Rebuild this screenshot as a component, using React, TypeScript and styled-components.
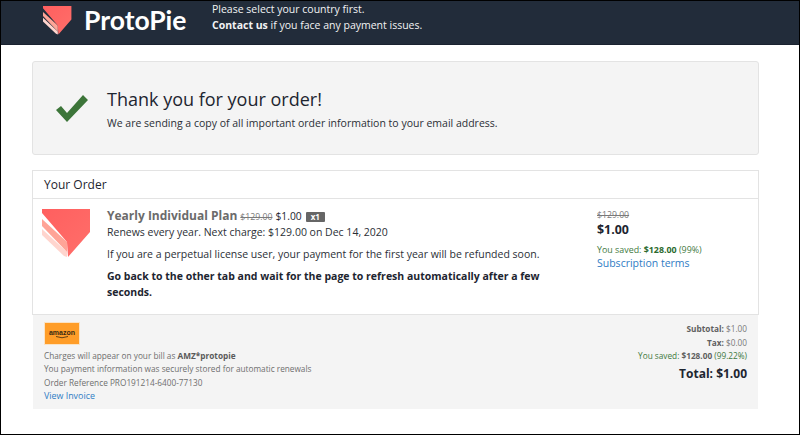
import React from "react";
import styled, { createGlobalStyle } from "styled-components";

const GlobalStyle = createGlobalStyle`
  html, body {
    margin: 0;
    padding: 0;
    background: #fff;
  }
  * {
    box-sizing: border-box;
  }
`;

const Page = styled.div`
  width: 800px;
  height: 435px;
  border: 1px solid #000;
  overflow: hidden;
  background: #fff;
  color: #1d2530;
  font-family: "Open Sans", "Liberation Sans", sans-serif;
`;

const TopBar = styled.header`
  height: 44px;
  background: #222c3a;
  border-bottom: 1px solid #1a2230;
  display: flex;
  align-items: flex-start;
  padding-left: 42px;
`;

const Brand = styled.div`
  display: flex;
  align-items: center;
  gap: 12px;
  width: 169px;
  height: 34px;
  margin-top: 2px;
`;

const BrandName = styled.span`
  color: #fff;
  font-size: 26.5px;
  font-weight: 700;
  line-height: 34px;
  margin-top: -1px;
  font-family: "Lato", "Open Sans", sans-serif;
`;

const TopNote = styled.div`
  color: #f2f3f4;
  font-size: 10.5px;
  line-height: 16px;
  strong {
    font-weight: 700;
  }
`;

const Content = styled.main`
  padding: 16px 40px 0 31px;
  display: flex;
  flex-direction: column;
`;

const ThanksBox = styled.section`
  height: 94px;
  background: #f4f4f4;
  border: 1px solid #e3e3e3;
  border-radius: 3px;
  display: flex;
  align-items: center;
  gap: 18px;
  padding-left: 23px;
`;

const ThanksText = styled.div`
  display: flex;
  flex-direction: column;
  gap: 3px;
`;

const ThanksTitle = styled.h1`
  margin: 0;
  font-size: 18px;
  font-weight: 400;
  line-height: 27px;
  color: #1d2530;
`;

const ThanksBody = styled.p`
  margin: 0;
  font-size: 10.5px;
  line-height: 15px;
  color: #2b2f36;
`;

const OrderCard = styled.section`
  margin-top: 15px;
  height: 145px;
  border: 1px solid #e3e3e3;
  display: flex;
  flex-direction: column;
`;

const OrderHeading = styled.h2`
  margin: 0;
  height: 28px;
  padding-left: 11px;
  border-bottom: 1px solid #e3e3e3;
  font-size: 12px;
  font-weight: 400;
  line-height: 27px;
  color: #1d2530;
`;

const OrderRow = styled.div`
  display: flex;
  padding: 9px 0 0 9px;
`;

const ProductLogo = styled.div`
  width: 65px;
  flex: none;
  padding-top: 1px;
`;

const ProductInfo = styled.div`
  width: 490px;
  flex: none;
  padding-right: 48px;
  font-size: 10.5px;
  line-height: 15px;
  color: #2b2f36;
`;

const TitleLine = styled.div`
  display: flex;
  align-items: baseline;
  gap: 3px;
  height: 15px;
`;

const PlanName = styled.span`
  font-size: 12px;
  font-weight: 700;
  color: #6b6b6b;
`;

const OldPrice = styled.s`
  font-size: 8.7px;
  color: #7a7a7a;
`;

const NewPrice = styled.span`
  font-size: 10.3px;
  color: #1d2530;
`;

const Qty = styled.span`
  background: #666;
  color: #fff;
  font-size: 8px;
  font-weight: 700;
  line-height: 10px;
  padding: 0 5px;
  border-radius: 1px;
  margin-left: 1px;
`;

const InfoLine = styled.p<{ $gap?: number; $bold?: boolean }>`
  margin: ${(p) => p.$gap ?? 0}px 0 0;
  font-weight: ${(p) => (p.$bold ? 700 : 400)};
  line-height: ${(p) => (p.$bold ? 16 : 15)}px;
  color: ${(p) => (p.$bold ? "#1d2530" : "#2b2f36")};
`;

const PriceColumn = styled.div`
  padding-top: 1px;
  display: flex;
  flex-direction: column;
  align-items: flex-start;
`;

const PriceBig = styled.div`
  font-size: 12.4px;
  font-weight: 700;
  line-height: 18px;
`;

const Saved = styled.div<{ $top?: number }>`
  color: #3f7a41;
  font-size: ${(p) => (p.$top ? 8.9 : 8.25)}px;
  line-height: 13.5px;
  margin-top: ${(p) => p.$top ?? 0}px;

  b {
    color: #2c6a2e;
    font-weight: 700;
  }
`;

const TermsLink = styled.a`
  color: #2f7cc4;
  font-size: 10.5px;
  line-height: 13px;
`;

const Summary = styled.section`
  height: 94px;
  margin: 0 1px;
  background: #f4f4f4;
  display: flex;
  justify-content: space-between;
  padding: 7px 11px 0 11px;
`;

const PayInfo = styled.div`
  display: flex;
  flex-direction: column;
  font-size: 8.25px;
  line-height: 13.5px;
  color: #6f6f6f;

  b {
    font-weight: 700;
    color: #5a5a5a;
  }
`;

const AmazonBadge = styled.div`
  width: 36px;
  height: 23px;
  margin: 0 0 3.5px;
  background: #ff9d28;
  border: 1px solid #fbe3c4;
  display: flex;
  flex-direction: column;
  align-items: center;
  justify-content: center;
`;

const AmazonWord = styled.span`
  font-size: 7px;
  line-height: 7px;
  font-weight: 700;
  color: #3a2a12;
  font-family: "Liberation Sans", sans-serif;
`;

const InvoiceLink = styled.a`
  color: #2f7cc4;
  font-size: 8.9px;
`;

const Totals = styled.div`
  display: flex;
  flex-direction: column;
  align-items: flex-end;
  font-size: 8.25px;
  line-height: 13.5px;
  color: #7a7a7a;

  b {
    font-weight: 700;
    color: #5f5f5f;
  }
`;

const GrandTotal = styled.div`
  font-size: 12px;
  font-weight: 700;
  line-height: 21px;
  color: #1d2530;
`;

const PieMark = ({ size }: { size: number }) => (
  <svg width={size} height={size} viewBox="0 0 49 49" style={{ display: "block" }}>
    <defs>
      <linearGradient id={`pie-${size}`} x1="0" y1="0" x2="1" y2="1">
        <stop offset="0" stopColor="#ff5f5f" />
        <stop offset="1" stopColor="#ff6f6a" />
      </linearGradient>
    </defs>
    <path d="M0 20 L25 43 L25 48 L22 47 L0 26 Z" fill="#ffd5ce" />
    <path d="M0 10 L25 33 L25 43 L0 17 Z" fill="#ffa497" />
    <path d="M0 0 H48 V23 L26 48 L25 33 L0 4 Z" fill={`url(#pie-${size})`} />
  </svg>
);

const CheckMark = () => (
  <svg width="33" height="29" viewBox="0 0 33 29" style={{ display: "block" }}>
    <path d="M0 16 L5 12 L11 19 L27 1 L32 6 L11 28 Z" fill="#3c7539" />
  </svg>
);

const App = () => {
  return (
    <>
      <GlobalStyle />
      <Page>
        <TopBar>
          <Brand>
            <PieMark size={29} />
            <BrandName>ProtoPie</BrandName>
          </Brand>
          <TopNote>
            Please select your country first.
            <br />
            <strong>Contact us</strong> if you face any payment issues.
          </TopNote>
        </TopBar>
        <Content>
          <ThanksBox>
            <CheckMark />
            <ThanksText>
              <ThanksTitle>Thank you for your order!</ThanksTitle>
              <ThanksBody>
                We are sending a copy of all important order information to your email address.
              </ThanksBody>
            </ThanksText>
          </ThanksBox>
          <OrderCard>
            <OrderHeading>Your Order</OrderHeading>
            <OrderRow>
              <ProductLogo>
                <PieMark size={49} />
              </ProductLogo>
              <ProductInfo>
                <TitleLine>
                  <PlanName>Yearly Individual Plan</PlanName>
                  <OldPrice>$129.00</OldPrice>
                  <NewPrice>$1.00</NewPrice>
                  <Qty>x1</Qty>
                </TitleLine>
                <InfoLine $gap={2}>Renews every year. Next charge: $129.00 on Dec 14, 2020</InfoLine>
                <InfoLine $gap={7}>
                  If you are a perpetual license user, your payment for the first year will be refunded soon.
                </InfoLine>
                <InfoLine $gap={6} $bold>
                  Go back to the other tab and wait for the page to refresh automatically after a few seconds.
                </InfoLine>
              </ProductInfo>
              <PriceColumn>
                <OldPrice>$129.00</OldPrice>
                <PriceBig>$1.00</PriceBig>
                <Saved $top={4}>
                  You saved: <b>$128.00</b> (99%)
                </Saved>
                <TermsLink>Subscription terms</TermsLink>
              </PriceColumn>
            </OrderRow>
          </OrderCard>
          <Summary>
            <PayInfo>
              <AmazonBadge>
                <AmazonWord>amazon</AmazonWord>
                <svg width="16" height="3" viewBox="0 0 16 3">
                  <path d="M2 0.5 Q8 3 14 0.5" stroke="#3a2a12" strokeWidth="0.8" fill="none" />
                </svg>
              </AmazonBadge>
              <span>
                Charges will appear on your bill as <b>AMZ*protopie</b>
              </span>
              <span>You payment information was securely stored for automatic renewals</span>
              <span>Order Reference PRO191214-6400-77130</span>
              <InvoiceLink>View Invoice</InvoiceLink>
            </PayInfo>
            <Totals>
              <span>
                <b>Subtotal:</b> $1.00
              </span>
              <span>
                <b>Tax:</b> $0.00
              </span>
              <Saved>
                You saved: <b>$128.00</b> (99.22%)
              </Saved>
              <GrandTotal>Total: $1.00</GrandTotal>
            </Totals>
          </Summary>
        </Content>
      </Page>
    </>
  );
};

export default App;
